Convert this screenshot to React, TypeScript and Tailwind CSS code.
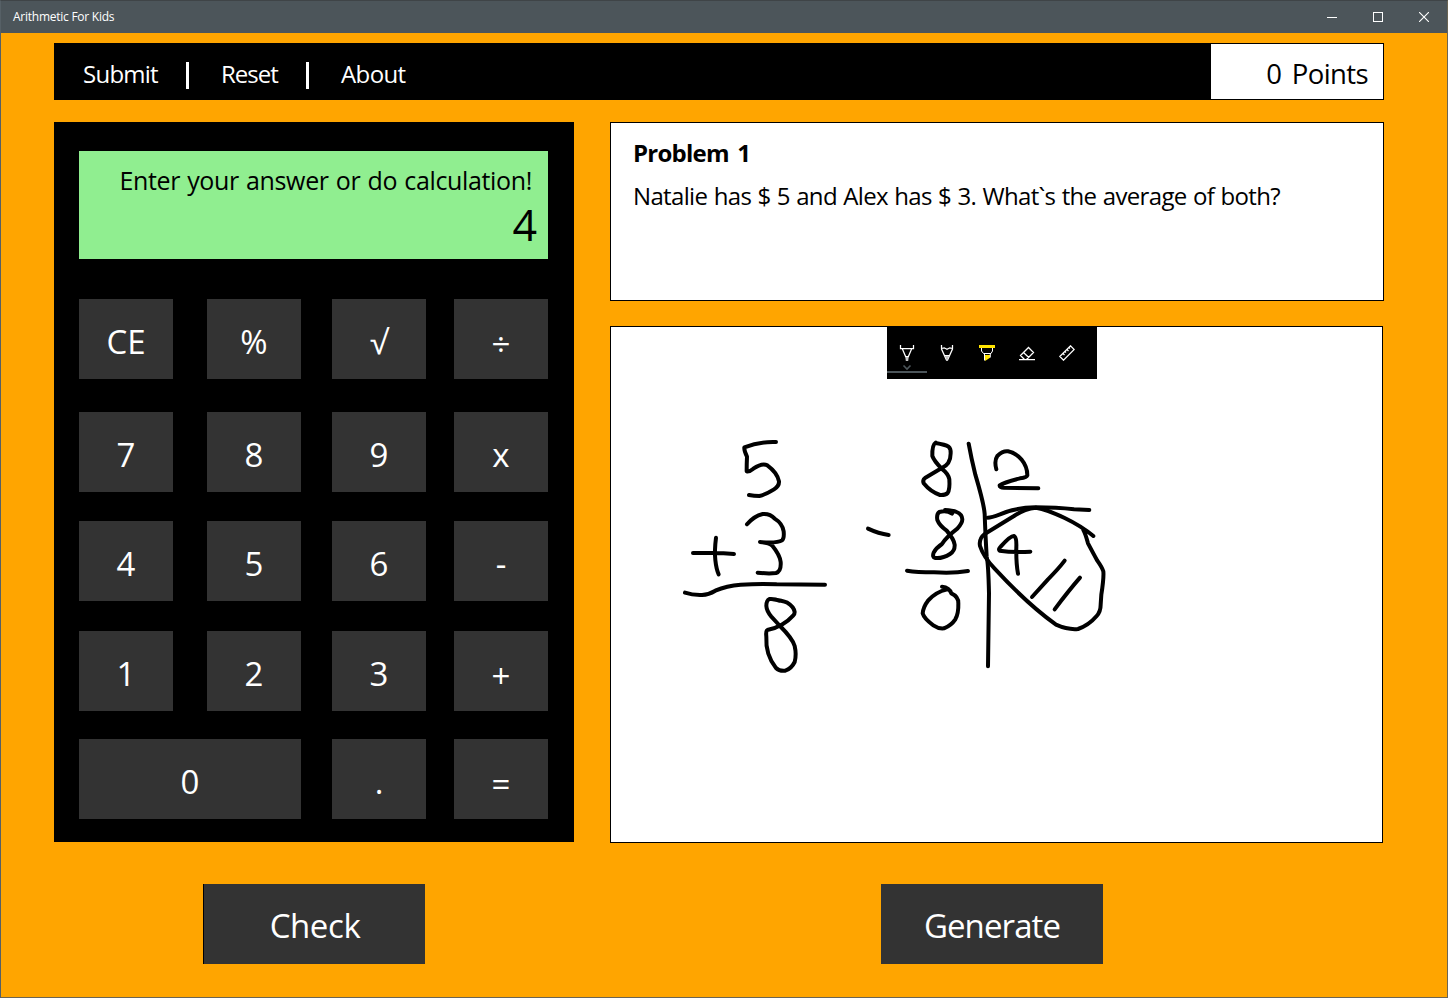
import type { ReactNode } from "react";

const keys: { label: string; wide?: boolean; low?: boolean }[] = [
  { label: "CE" }, { label: "%" }, { label: "√" }, { label: "÷", low: true },
  { label: "7" }, { label: "8" }, { label: "9" }, { label: "x" },
  { label: "4" }, { label: "5" }, { label: "6" }, { label: "-" },
  { label: "1" }, { label: "2" }, { label: "3" }, { label: "+", low: true },
  { label: "0", wide: true }, { label: "." }, { label: "=", low: true },
];

function TitleBar() {
  return (
    <header className="flex h-8 shrink-0 items-center justify-between bg-[#4c555a] pl-3 text-white">
      <span className="text-[12px] leading-none tracking-[-0.25px]">Arithmetic For Kids</span>
      <div className="flex h-8">
        <button className="flex w-[46px] items-center justify-center" aria-label="Minimize">
          <svg width="10" height="10" shapeRendering="crispEdges"><rect y="5" width="10" height="1" fill="#fff" /></svg>
        </button>
        <button className="flex w-[46px] items-center justify-center" aria-label="Maximize">
          <svg width="10" height="10" shapeRendering="crispEdges"><rect x=".5" y=".5" width="9" height="9" fill="none" stroke="#fff" /></svg>
        </button>
        <button className="flex w-[46px] items-center justify-center" aria-label="Close">
          <svg width="10" height="10"><path d="M0 0L10 10M10 0L0 10" stroke="#fff" strokeWidth="1.1" /></svg>
        </button>
      </div>
    </header>
  );
}

function MenuBar() {
  return (
    <nav className="flex h-[57px] border border-black bg-black text-[24px] leading-none text-white">
      <div className="flex flex-1 items-center pl-7">
        <button className="w-[103px] pt-[5px] text-left tracking-[-0.75px]">Submit</button>
        <i className="h-[27px] w-[3px] translate-y-1 bg-white" />
        <button className="ml-8 w-[85px] pt-[5px] text-left tracking-[-1px]">Reset</button>
        <i className="h-[27px] w-[3px] translate-y-1 bg-white" />
        <button className="ml-8 pt-[5px] text-left tracking-[-0.6px]">About</button>
      </div>
      <div className="flex w-[172px] items-center justify-end bg-white pr-[15px] pt-[5px] text-[27.5px] text-black">
        <span className="whitespace-pre tracking-[-0.6px] [word-spacing:4px]">0 Points</span>
      </div>
    </nav>
  );
}

function Calculator() {
  return (
    <section className="h-[720px] w-[520px] bg-black px-[25px] pt-[29px]">
      <div className="flex h-[108px] w-[469px] flex-col items-end bg-[#90ee90] pt-[14px] text-black">
        <span className="mr-4 text-[25px] leading-[30px] tracking-[-0.35px] [word-spacing:1px]">Enter your answer or do calculation!</span>
        <span className="mr-[11px] text-[43px] leading-[60px]">4</span>
      </div>
      <div className="mt-10 grid grid-cols-[128px_125px_122px_94px] grid-rows-[113px_109px_110px_108px_80px]">
        {keys.map((k) => (
          <button
            key={k.label}
            className={`flex h-20 items-center justify-center bg-[#333333] text-[33px] leading-none text-white ${k.low ? "pt-2" : "pt-1"} ${k.wide ? "col-span-2 w-[222px]" : "w-[94px]"}`}
          >
            {k.label}
          </button>
        ))}
      </div>
    </section>
  );
}

function Tool({ selected, children }: { selected?: boolean; children: ReactNode }) {
  return (
    <button className="relative flex h-[52px] w-10 justify-center pt-[18px]">
      <svg width="16" height="16" viewBox="0 0 16 16" fill="none" stroke="#fff" strokeWidth="1.25">
        {children}
      </svg>
      {selected && (
        <svg className="absolute left-0 top-[37px]" width="40" height="9">
          <path d="M16.5 1.5L20 5L23.5 1.5" fill="none" stroke="#4c555a" strokeWidth="1.6" />
          <rect y="7" width="40" height="2" fill="#4c555a" />
        </svg>
      )}
    </button>
  );
}

function InkToolbar() {
  return (
    <div className="absolute left-[276px] top-0 flex h-[52px] w-[210px] bg-black">
      <Tool selected>
        <path d="M1.5 0V3.5H14.5V0M3.2 3.5L6.6 11.5M12.8 3.5L9.4 11.5M6 11.5H10" />
        <path d="M6.3 12H9.7L9.2 16H6.8Z" fill="#c4c4c4" stroke="none" />
      </Tool>
      <Tool>
        <path d="M2.5 0V4L7.5 15L8.5 15L13.5 4V0M2.5 3.5L5.2 2.8L8 4.4L10.8 2.8L13.5 3.5M5.5 10.5H10.5" />
        <path d="M6 11H10L8 15.5Z" fill="#c4c4c4" stroke="none" />
      </Tool>
      <Tool>
        <rect x="0" y="0" width="16" height="3" fill="#ffe400" stroke="none" />
        <path d="M6 10H11V12.8L6 16Z" fill="#ffe400" stroke="none" />
        <path d="M2.5 3V6L4.5 8.5H12L13.5 6V3M5.5 8.5V15.5M11.3 8.5V12.5" strokeWidth="1" />
      </Tool>
      <Tool>
        <path d="M1.5 10.5L9.5 2.5L14.5 7.5L7.5 14.5H5.5ZM4.5 7.5L9.8 12.5M0 14.5H16" />
      </Tool>
      <Tool>
        <path d="M.8 11.5L11.5 .8L15.2 4.5L4.5 15.2ZM4 8.5L5.5 10M6 6.5L7 7.5M8 4.5L9.5 6M10 2.5L11 3.5" />
      </Tool>
    </div>
  );
}

function Ink() {
  return (
    <svg className="block" width="771" height="515" fill="none" stroke="#000" strokeWidth="12" strokeLinecap="round" strokeLinejoin="round">
      {/* addition */}
      <g transform="translate(59 103) scale(.33333)">
        <path d="M318 36Q270 34 223 52Q222 62 231 80Q230 102 230 124Q238 126 250 116Q276 98 292 106Q322 128 327 154Q328 168 312 178Q284 195 268 198Q252 198 237 195" />
        <path d="M231 283Q252 258 278 252Q300 250 314 266Q337 280 341 304Q343 326 336 331Q322 340 270 336Q296 338 306 346Q330 376 332 396Q334 424 318 429Q296 432 263 428" />
        <path d="M69 369L130 369Q160 369 192 372M138 323Q133 362 136 390Q139 418 146 433" />
        <path d="M45 488Q68 496 96 495Q116 494 136 482Q170 467 212 464Q270 461 320 463L465 464" />
        <path d="M328 512Q316 506 298 507Q289 511 289 528Q290 544 304 560L330 588Q368 626 374 648Q380 674 374 696Q364 716 346 722Q328 724 318 714Q286 674 289 620Q287 602 292 600Q340 590 370 556Q374 552 374 546Q372 530 352 518Q336 512 309 508" />
      </g>
      {/* division */}
      <g transform="translate(239 103) scale(.33333)">
        <path d="M257 38Q246 45 247 78Q252 92 274 115Q296 132 298 148Q300 178 293 189Q286 196 270 195Q242 186 221 160Q217 150 225 144L274 115Q302 104 302 70Q303 56 296 50Q286 44 257 39" />
        <path d="M356 41Q364 86 376 134Q402 222 404 252Q406 310 410 380Q415 400 417 490L414 709" />
        <path d="M439 118Q432 92 442 78Q458 62 474 64Q496 68 514 88Q532 110 532 136Q530 142 510 145Q460 158 449 166Q448 172 462 173L565 175" />
        <path d="M306 251Q290 240 268 246Q259 252 262 270Q268 286 290 302Q312 328 314 344Q315 362 300 372Q278 386 256 384Q246 382 251 368Q258 354 276 342Q288 322 322 296Q337 280 337 268Q336 252 320 246Q308 241 285 240" />
        <path d="M54 296Q86 311 116 315" />
        <path d="M171 422Q200 427 252 427Q310 431 354 423" />
        <path d="M276 470Q298 472 304 490Q326 500 325 520Q326 550 316 568Q304 586 282 595Q266 597 250 586Q222 566 218 550Q220 530 234 512Q256 486 292 478" />
        <path d="M413 263Q424 263 450 253Q494 233 556 232Q620 232 672 238L718 240" />
        <path d="M730 318Q694 288 644 264Q590 238 558 233Q524 236 492 258L404 312Q386 326 390 348Q400 380 434 416Q532 522 618 584Q654 600 684 597Q716 586 740 558Q752 544 752 524L754 494Q762 442 760 424Q756 412 742 392Q732 374 714 340Q706 310 700 300" />
        <path d="M541 365Q490 368 449 362Q444 358 452 350Q482 316 492 318Q500 322 499 350Q498 400 504 431" />
        <path d="M644 392Q626 416 594 448L546 501M690 443Q656 482 614 538" />
      </g>
    </svg>
  );
}

export default function App() {
  return (
    <div className="flex h-[998px] w-[1448px] flex-col overflow-hidden border border-[#6b6554] border-l-[#566066] border-t-[#3f4447] bg-[#ffa500] font-['Open_Sans',sans-serif]">
      <TitleBar />
      <main className="pl-[53px] pr-[63px] pt-[10px]">
        <MenuBar />
        <div className="mt-[22px] flex gap-9">
          <Calculator />
          <div className="flex flex-1 flex-col">
            <section className="h-[179px] border border-black bg-white pl-[22px] pt-[14px] text-black">
              <h1 className="text-[24px] font-bold leading-8 tracking-[-0.75px] [word-spacing:3px]">Problem 1</h1>
              <p className="mt-[11px] text-[24px] leading-8 tracking-[-0.65px] [word-spacing:0.7px]">
                Natalie has $ 5 and Alex has $ 3. What`s the average of both?
              </p>
            </section>
            <section className="relative mt-[25px] h-[517px] w-[773px] border border-black bg-white">
              <Ink />
              <InkToolbar />
            </section>
          </div>
        </div>
        <div className="mt-[41px] flex pl-[149px] text-[33px] leading-none text-white">
          <button className="flex h-20 w-[222px] items-center justify-center border-l border-black bg-[#333333] pl-px pt-[3px] tracking-[-0.4px]">Check</button>
          <button className="ml-[456px] flex h-20 w-[222px] items-center justify-center bg-[#333333] pt-[3px] tracking-[-0.9px]">Generate</button>
        </div>
      </main>
    </div>
  );
}
